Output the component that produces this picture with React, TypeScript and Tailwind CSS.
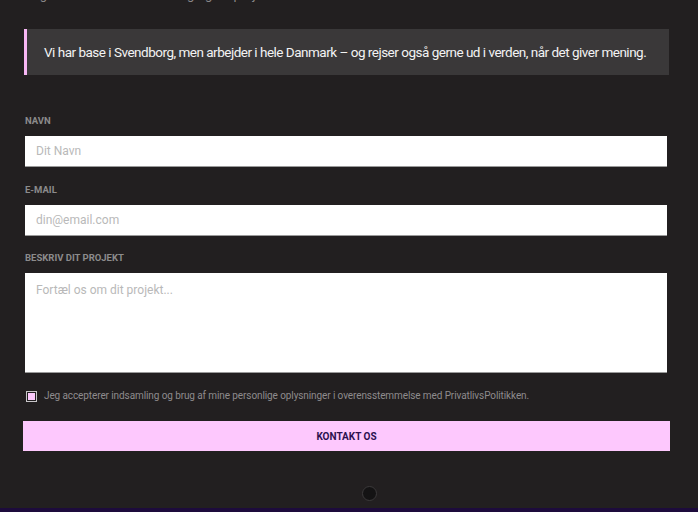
import { useState } from 'react';

export default function App() {
  const [accepted, setAccepted] = useState(true);

  return (
    <div
      className="relative h-[512px] w-[698px] overflow-hidden bg-[#221f20] text-white"
      style={{ fontFamily: 'Roboto, "Liberation Sans", sans-serif' }}
    >
      {/* cut-off line from the section above */}
      <p className="-mt-[13px] ml-[25px] text-[13px] leading-[16px] text-[#8a8788]">
        Vi glæder os til at høre fra dig og dit projekt
      </p>

      <div className="ml-[23px] mt-[26px] w-[647px]">
        {/* Quote */}
        <div className="ml-px flex h-[46px] w-[645px] items-center border-l-[3px] border-[#f7b6f4] bg-[#3a3839] pl-[17px]">
          <p className="whitespace-nowrap text-[13.5px] tracking-[-0.5px] text-[#f3f3f3]">
            Vi har base i Svendborg, men arbejder i hele Danmark – og rejser også gerne ud i verden, når det giver mening.
          </p>
        </div>

        <form className="mt-[40px]" onSubmit={(e) => e.preventDefault()}>
          <label className="ml-[2px] block text-[9.5px] font-bold uppercase leading-[12px] text-[#8c8b8c]">
            Navn
          </label>
          <input
            placeholder="Dit Navn"
            className="ml-[2px] mt-[9px] block h-[31px] w-[642px] border-b border-[#9a9a9a] bg-white px-[11px] text-[12px] text-[#333] outline-none placeholder:text-[#b9b9b9]"
          />

          <label className="ml-[2px] mt-[17px] block text-[9.5px] font-bold uppercase leading-[12px] text-[#8c8b8c]">
            E-mail
          </label>
          <input
            placeholder="din@email.com"
            className="ml-[2px] mt-[9px] block h-[31px] w-[642px] border-b border-[#9a9a9a] bg-white px-[11px] text-[12px] text-[#333] outline-none placeholder:text-[#b9b9b9]"
          />

          <label className="ml-[2px] mt-[16px] block text-[9.5px] font-bold uppercase leading-[12px] text-[#8c8b8c]">
            Beskriv dit projekt
          </label>
          <textarea
            placeholder="Fortæl os om dit projekt..."
            className="ml-[2px] mt-[9px] block h-[100px] w-[642px] resize-none border-b border-[#9a9a9a] bg-white px-[11px] py-[10px] text-[12px] leading-[14px] text-[#333] outline-none placeholder:text-[#b9b9b9]"
          />

          <label className="ml-[3px] mt-[17px] flex cursor-pointer items-center gap-[7px]">
            <button
              type="button"
              onClick={() => setAccepted(!accepted)}
              className="flex h-[11px] w-[11px] items-center justify-center border border-[#c9c6c9] bg-[#221f20]"
            >
              {accepted && <span className="h-[7px] w-[7px] bg-[#fcc8fc]" />}
            </button>
            <span className="text-[10px] leading-[12px] tracking-[-0.1px] text-[#8e8b8d]">
              Jeg accepterer indsamling og brug af mine personlige oplysninger i overensstemmelse med PrivatlivsPolitikken.
            </span>
          </label>

          <button
            type="submit"
            className="mt-[19px] flex h-[30px] w-[647px] items-center justify-center bg-[#fdc8fd] text-[10px] font-bold uppercase text-[#2c1150]"
          >
            Kontakt os
          </button>
        </form>
      </div>

      {/* scroll-to-top dot */}
      <div className="absolute left-[362px] top-[486px] h-[15px] w-[15px] rounded-full border border-[#3c3a3b] bg-[#141314]" />

      {/* footer edge */}
      <div className="absolute bottom-0 left-0 h-[4px] w-full bg-[#1d0b3c]" />
    </div>
  );
}
